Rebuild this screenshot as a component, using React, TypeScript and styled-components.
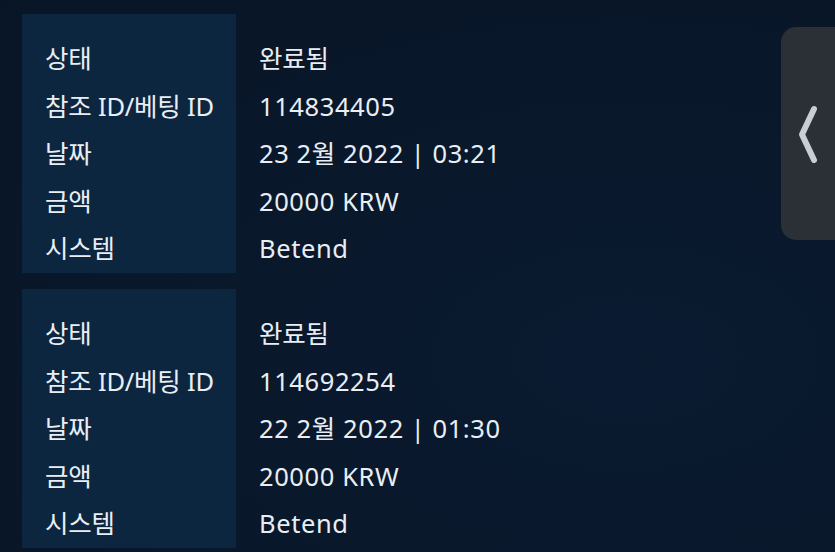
import React from 'react';
import styled, { createGlobalStyle } from 'styled-components';

interface Record {
    status: string;
    refId: string;
    date: string;
    time: string;
    amount: string;
    system: string;
}

const records: Record[] = [
    {
        status: '완료됨',
        refId: '114834405',
        date: '23 2월 2022',
        time: '03:21',
        amount: '20000 KRW',
        system: 'Betend',
    },
    {
        status: '완료됨',
        refId: '114692254',
        date: '22 2월 2022',
        time: '01:30',
        amount: '20000 KRW',
        system: 'Betend',
    },
];

const GlobalStyle = createGlobalStyle`
    html, body {
        margin: 0;
        padding: 0;
        background: #0a1a2e;
    }
    body {
        font-family: "Noto Sans", "Noto Sans CJK KR", sans-serif;
    }
`;

const Page = styled.div`
    width: 835px;
    height: 552px;
    overflow: hidden;
    position: relative;
    background: radial-gradient(ellipse at 75% 65%, #0a1a30 0%, #09182b 45%, #081526 100%);
    padding: 14px 0 0 22px;
    box-sizing: border-box;
    display: flex;
    flex-direction: column;
    gap: 18px;
`;

const Card = styled.div`
    display: grid;
    grid-template-columns: 214px 1fr;
    height: 257px;
`;

const LabelColumn = styled.div`
    background: #0d2640;
    padding: 21px 0 0 23px;
    display: flex;
    flex-direction: column;
`;

const ValueColumn = styled.div`
    padding: 21px 0 0 23px;
    display: flex;
    flex-direction: column;
`;

const Cell = styled.div<{ $wide?: boolean }>`
    height: 47.5px;
    line-height: 47.5px;
    font-size: 25.5px;
    color: #e9eef4;
    white-space: nowrap;
    letter-spacing: ${p => (p.$wide ? '0.6px' : '-0.2px')};
`;

const Divider = styled.span`
    margin: 0 7px;
`;

const SideTab = styled.div`
    position: absolute;
    top: 27px;
    right: -20px;
    width: 74px;
    height: 213px;
    background: #2b2f36;
    border-radius: 15px;
    display: flex;
    align-items: center;
    padding-left: 16px;
    box-sizing: border-box;
`;

const labels = ['상태', '참조 ID/베팅 ID', '날짜', '금액', '시스템'];

const RecordCard = ({ record }: { record: Record }) => (
    <Card>
        <LabelColumn>
            {labels.map(label => (
                <Cell key={label}>{label}</Cell>
            ))}
        </LabelColumn>
        <ValueColumn>
            <Cell>{record.status}</Cell>
            <Cell $wide>{record.refId}</Cell>
            <Cell $wide>
                {record.date}
                <Divider>|</Divider>
                {record.time}
            </Cell>
            <Cell $wide>{record.amount}</Cell>
            <Cell $wide>{record.system}</Cell>
        </ValueColumn>
    </Card>
);

const App = () => {
    return (
        <>
            <GlobalStyle />
            <Page>
                {records.map(r => (
                    <RecordCard key={r.refId} record={r} />
                ))}
                <SideTab>
                    <svg width="24" height="64" viewBox="0 0 24 64">
                        <path
                            d="M17 7 L5 32.5 L17 58"
                            fill="none"
                            stroke="#c8cdd6"
                            strokeWidth="6"
                            strokeLinecap="round"
                            strokeLinejoin="round"
                        />
                    </svg>
                </SideTab>
            </Page>
        </>
    );
};

export default App;
